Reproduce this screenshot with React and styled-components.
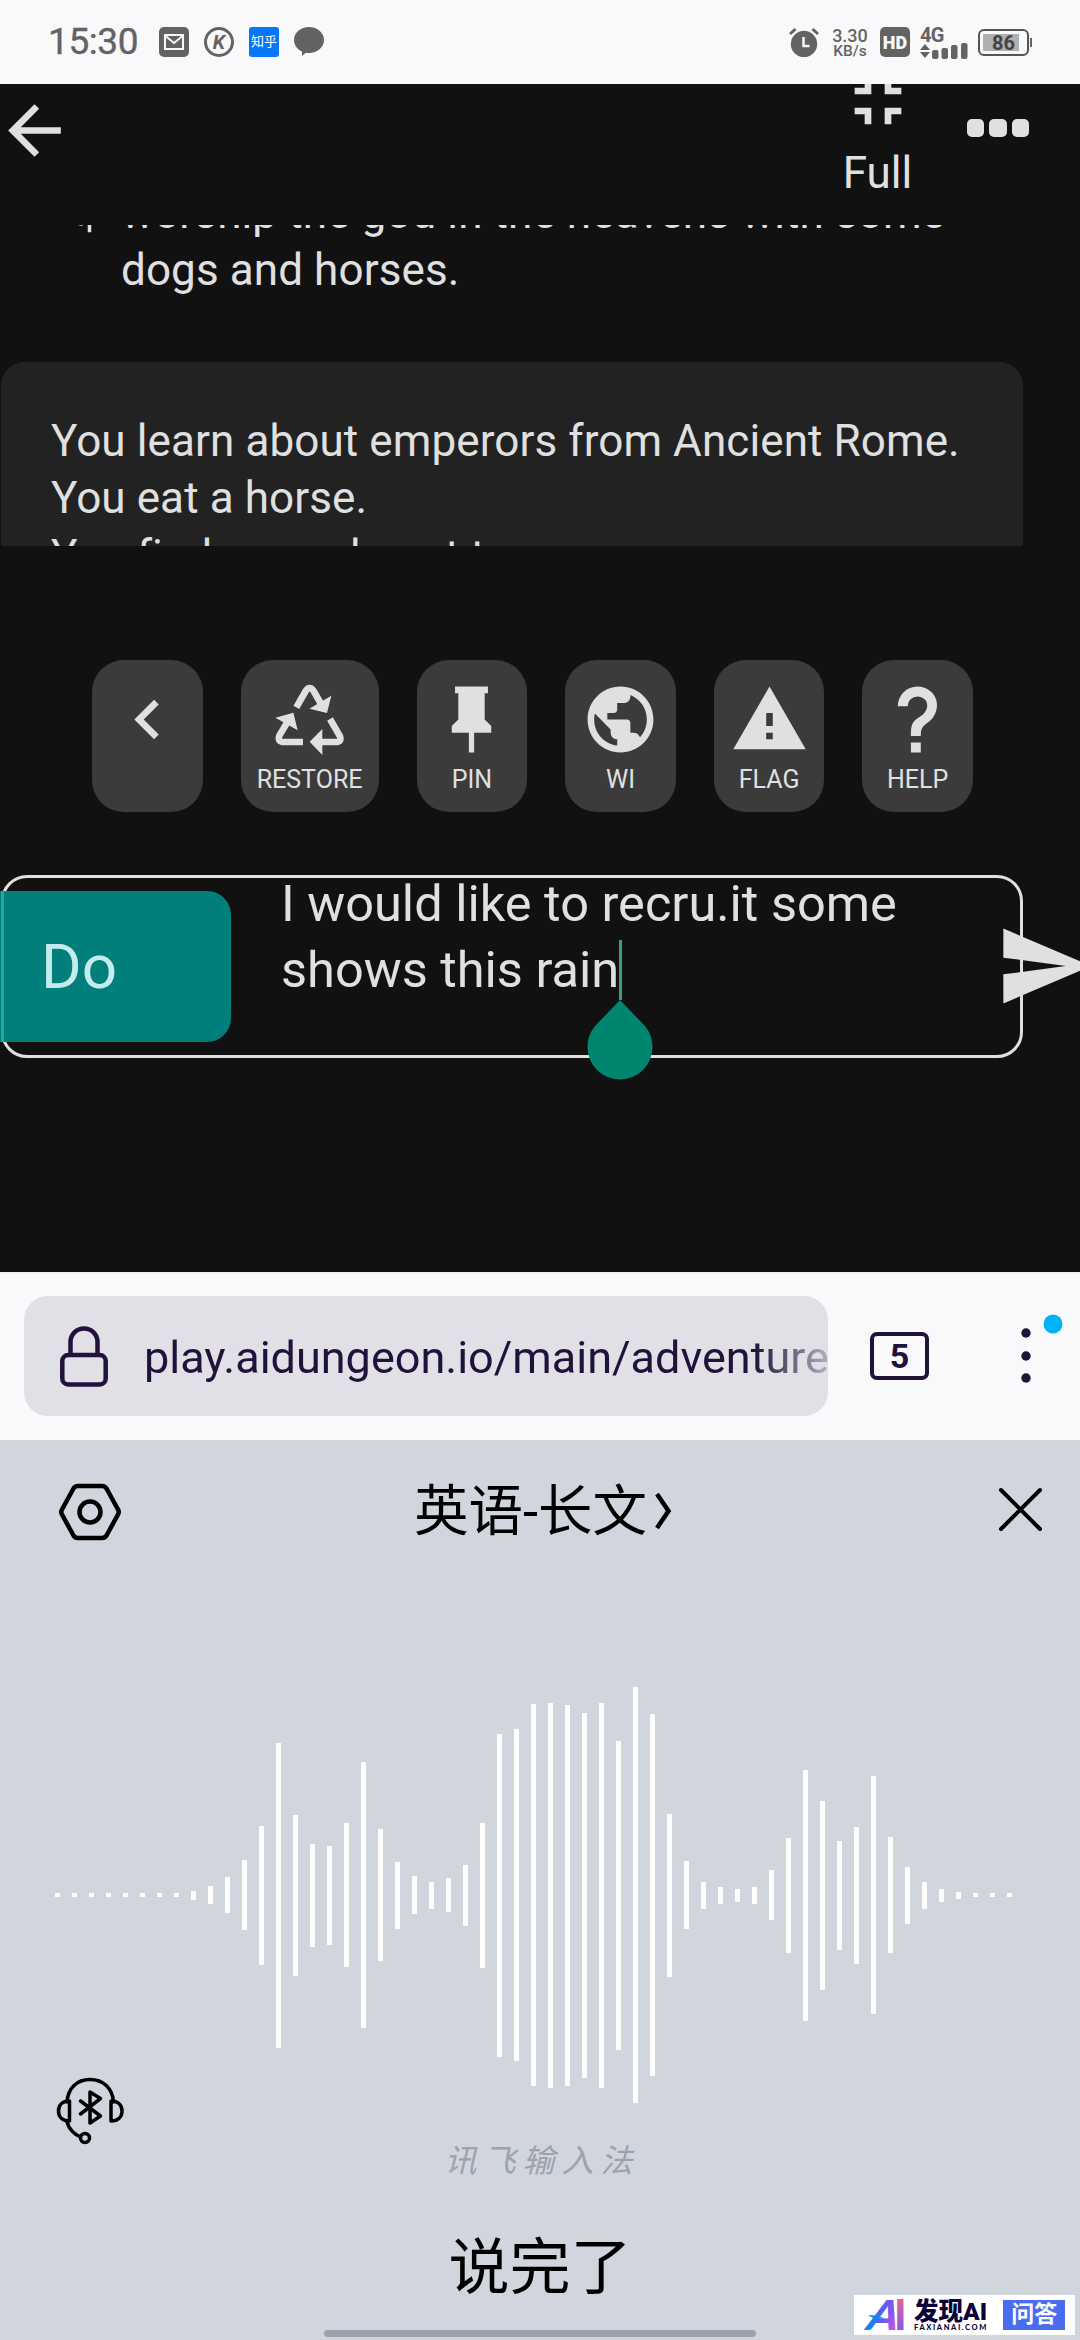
// App.jsx
import React from 'react';
import styled, { createGlobalStyle } from 'styled-components';
import {
  MdArrowBack,
  MdChevronLeft,
  MdDirectionsRun,
  MdFullscreenExit,
  MdPublic,
  MdSend,
  MdWarning,
} from 'react-icons/md';

const GlobalStyle = createGlobalStyle`
  * {
    box-sizing: border-box;
  }
  body {
    margin: 0;
    background: #111;
    font-family: Roboto, 'Noto Sans CJK SC', sans-serif;
  }
  svg {
    display: block;
    flex-shrink: 0;
  }
`;

const Screen = styled.div`
  position: relative;
  width: 1080px;
  height: 2340px;
  overflow: hidden;
  display: flex;
  flex-direction: column;
`;

/* status bar */

const StatusBar = styled.div`
  height: 84px;
  flex-shrink: 0;
  padding: 0 51px 0 48px;
  display: flex;
  align-items: center;
  justify-content: space-between;
  background: #f9f9fb;
  color: #636363;
`;

const StatusGroup = styled.div`
  display: flex;
  align-items: center;
  gap: ${(p) => p.$gap}px;
`;

const Clock = styled.span`
  width: 96px;
  font-size: 37px;
  line-height: 40px;
  letter-spacing: -0.4px;
  -webkit-text-stroke: 0.4px #636363;
`;

const ZhihuBadge = styled.span`
  width: 30px;
  height: 30px;
  border-radius: 3px;
  background: #0777f9;
  color: #fff;
  font-size: 13px;
  line-height: 30px;
  text-align: center;
`;

const KBadge = styled.span`
  width: 30px;
  height: 30px;
  border: 3px solid #636363;
  border-radius: 50%;
  font-size: 20px;
  font-weight: 700;
  font-style: italic;
  line-height: 24px;
  text-align: center;
`;

const NetSpeed = styled.div`
  width: 36px;
  margin-left: 3px;
  text-align: center;
  font-weight: 500;
  font-size: 18px;
  line-height: 17px;

  small {
    display: block;
    font-size: 15.5px;
    line-height: 14px;
  }
`;

const HdBadge = styled.span`
  width: 30px;
  height: 30px;
  margin-left: 2px;
  border-radius: 5px;
  background: #636363;
  color: #f9f9fb;
  font-size: 18px;
  font-weight: 900;
  line-height: 31px;
  text-align: center;
`;

const Network = styled.div`
  width: 48px;
  height: 31px;
  font-size: 20px;
  font-weight: 700;
  line-height: 16px;
  letter-spacing: -0.8px;
`;

const Battery = styled.div`
  position: relative;
  width: 51px;
  height: 27px;
  padding: 3px;
  border: 2px solid #555;
  border-radius: 6px;
  font-size: 20px;
  font-weight: 700;
  line-height: 18px;
  text-align: center;
  color: #444;
  background: linear-gradient(90deg, #b0b0b0 88%, transparent 88%) content-box;

  &::after {
    content: '';
    position: absolute;
    right: -5px;
    top: 7px;
    width: 2px;
    height: 9px;
    background: #636363;
  }
`;

/* game page */

const GamePage = styled.main`
  height: 1188px;
  flex-shrink: 0;
  background: #111;
  color: #e0e0e0;
`;

const GameHeader = styled.header`
  height: 141px;
  padding: 0 51px 0 0;
  display: flex;
  align-items: flex-start;
  overflow: hidden;
`;

const BackButton = styled.button`
  margin: 7px auto 0 -5px;
  padding: 0;
  border: none;
  background: none;
  color: inherit;
`;

const FullButton = styled.button`
  width: 80px;
  height: 141px;
  margin-top: -23px;
  padding: 0;
  border: none;
  background: none;
  color: inherit;
  display: flex;
  flex-direction: column;
  align-items: center;
  gap: 6px;
  font: 44px/52px Roboto, sans-serif;
`;

const MoreDots = styled.div`
  display: flex;
  gap: 5px;
  margin: 35px 0 0 49px;
`;

const Dot = styled.span`
  width: 17.5px;
  height: 18px;
  border-radius: 5px;
  background: #e0e0e0;
`;

const Story = styled.section`
  height: 321px;
  overflow: hidden;
  font-size: 44px;
  line-height: 57.3px;
  letter-spacing: 0.1px;
  white-space: nowrap;
`;

const ActionEntry = styled.div`
  display: flex;
  gap: 14px;
  margin-top: -40px;
  padding-left: 65px;

  svg {
    margin-top: 7px;
  }
`;

const StoryCard = styled.div`
  margin: 62px 0 0 1px;
  width: 1022px;
  padding: 51.5px 50px;
  border-radius: 24px;
  background: #222;
`;

const Toolbar = styled.nav`
  display: flex;
  gap: 38px;
  margin-top: 114px;
  padding-left: 92px;
`;

const Tool = styled.button`
  width: ${(p) => (p.$wide ? 138 : 110.6)}px;
  height: 152px;
  padding: 20px 0 0;
  border: none;
  border-radius: 32px;
  background: #3b3b3b;
  color: #e0e0e0;
  display: flex;
  flex-direction: column;
  align-items: center;
  font: 25px/30px Roboto, sans-serif;
`;

const ToolLabel = styled.span`
  margin-top: 6px;
`;

const InputRow = styled.div`
  position: relative;
  display: flex;
  align-items: center;
  width: 1022px;
  height: 183px;
  margin: 63px 0 0 1px;
  border: 3px solid #e0e0e0;
  border-radius: 26px;
`;

const ModeButton = styled.button`
  width: 231px;
  height: 151px;
  margin-left: -4px;
  padding: 0 0 0 41px;
  border: none;
  border-radius: 0 24px 24px 0;
  background: linear-gradient(90deg, #007f7b 1px, #1fa99c 1px 4px, #007f7b 4px);
  color: #c5ebee;
  text-align: left;
  font: 62px/70px Roboto, sans-serif;
`;

const Draft = styled.div`
  align-self: flex-start;
  margin: -7px 0 0 50px;
  font-size: 50.5px;
  line-height: 66px;
  white-space: pre;
`;

const Caret = styled.span`
  position: absolute;
  left: 615px;
  top: 62px;
  width: 3px;
  height: 60px;
  background: #3f9d72;
`;

const CaretHandle = styled.svg`
  position: absolute;
  left: 583px;
  top: 122px;
`;

const SendButton = styled(MdSend)`
  position: absolute;
  left: 991px;
  top: 38px;
`;

/* browser bar */

const BrowserBar = styled.div`
  height: 168px;
  flex-shrink: 0;
  padding: 0 14px 0 24px;
  display: flex;
  align-items: center;
  background: #f9f9fb;
  box-shadow: inset 0 2px #f1f1f3;
  color: #20123a;
`;

const AddressField = styled.div`
  width: 804px;
  height: 120px;
  padding-left: 36px;
  display: flex;
  align-items: center;
  gap: 36px;
  border-radius: 24px;
  background: #e0e0e6;
`;

const Url = styled.span`
  flex: 1;
  margin-top: 3px;
  overflow: hidden;
  font-size: 45px;
  line-height: 60px;
  white-space: nowrap;
  mask-image: linear-gradient(90deg, #000 610px, rgba(0, 0, 0, 0.25) 683px);
`;

const TabCount = styled.div`
  width: 60px;
  height: 48px;
  margin-left: 42px;
  border: 4px solid #20123a;
  border-radius: 7px;
  font-size: 34px;
  font-weight: 700;
  line-height: 40px;
  text-align: center;
`;

const BrowserMenu = styled.svg`
  margin-left: 83px;
`;

/* voice keyboard */

const Keyboard = styled.section`
  flex: 1;
  display: flex;
  flex-direction: column;
  align-items: center;
  background: #d0d5de;
  color: #000;
`;

const KeyboardHeader = styled.div`
  width: 100%;
  height: 144px;
  padding: 0 37px 0 58px;
  display: flex;
  align-items: center;
  justify-content: space-between;
`;

const Language = styled.div`
  display: flex;
  align-items: center;
  gap: 7px;
  margin: 0 33px 3px 0;
  font-size: 54.5px;
  line-height: 80px;
`;

const CloseIcon = styled.svg`
  margin-bottom: 7px;
`;

const Waveform = styled.div`
  height: 416px;
  width: 100%;
  margin-top: 103px;
  padding-left: 55px;
  display: flex;
  align-items: center;
  gap: 12px;
`;

const WaveBar = styled.span`
  width: 5px;
  height: ${(p) => p.$height}px;
  background: #fff;
`;

const KeyboardFooter = styled.div`
  width: 100%;
  height: 237px;
  display: grid;
  grid-template-columns: 126px 1fr 126px;
  justify-items: center;
`;

const Headset = styled.svg`
  margin: -28px 0 0 54px;
  justify-self: start;
`;

const FooterCenter = styled.div`
  display: flex;
  flex-direction: column;
  align-items: center;
`;

const Brand = styled.span`
  margin: 36px 0 0 4px;
  font-size: 32px;
  font-style: italic;
  line-height: 44px;
  letter-spacing: 7px;
  color: #9da2ab;
`;

const DoneButton = styled.button`
  margin-top: 40px;
  padding: 0;
  border: none;
  background: none;
  color: #000;
  font: 61px/90px Roboto, 'Noto Sans CJK SC', sans-serif;
`;

const HomeIndicator = styled.div`
  position: absolute;
  left: 324px;
  bottom: 3px;
  width: 432px;
  height: 7px;
  border-radius: 4px;
  background: #9ca2ab;
`;

const Watermark = styled.div`
  position: absolute;
  right: 5px;
  bottom: 5px;
  width: 221px;
  height: 40px;
  padding: 0 10px;
  display: flex;
  align-items: center;
  background: #fff;
  color: #0b0238;
`;

const WatermarkName = styled.div`
  width: 76px;
  margin: -1px 14px 0 8px;
  font-size: 24.5px;
  font-weight: 900;
  line-height: 25px;
  white-space: nowrap;

  small {
    display: block;
    font: 900 7.5px/7px Lato, sans-serif;
    letter-spacing: 1.6px;
  }
`;

const WatermarkTag = styled.span`
  width: 62px;
  height: 30px;
  background: #4a6cf0;
  color: #fff;
  font-size: 23px;
  font-weight: 700;
  line-height: 29px;
  text-align: center;
`;

const waveHeights = [
  4, 4, 4, 4, 4, 4, 4, 4, 9, 18, 36, 70, 139, 305, 161, 103, 99, 144, 266, 132,
  67, 38, 27, 34, 61, 145, 323, 332, 382, 385, 381, 365, 385, 309, 416, 362,
  163, 68, 27, 17, 13, 17, 50, 115, 251, 189, 109, 137, 238, 116, 57, 27, 13,
  7, 4, 4, 4,
];

const RecycleIcon = () => (
  <svg width="79" height="79" viewBox="632 121 237 237" fill="none" stroke="currentColor" strokeWidth="20">
    <path d="M711 203l28-49q12-18 24 0l24 42M812 238l30 52q5 17-12 17h-45M731 307h-62q-15-3-9-19l28-47" />
    <path fill="currentColor" stroke="none" d="M750 207l53 13 13-52zM751 306l38-38v78zM648 234l54-15 13 53z" />
  </svg>
);

const PinIcon = () => (
  <svg width="79" height="79" viewBox="0 0 24 24" fill="currentColor">
    <path d="M16 12V4h1V2H7v2h1v8l-2 2v2h5.2v6h1.6v-6H18v-2z" />
  </svg>
);

const QuestionIcon = () => (
  <svg width="79" height="79" viewBox="0 0 24 24" fill="currentColor">
    <path d="M10 19h3v3h-3zM12 2c5.35.22 7.68 5.62 4.5 9.67-.83 1-2.17 1.66-2.83 2.5C13 15 13 16 13 17h-3c0-1.67 0-3.08.67-4.08.66-1 2-1.59 2.83-2.25C15.92 8.43 15.32 5.26 12 5a3 3 0 0 0-3 3H6a6 6 0 0 1 6-6z" />
  </svg>
);

const tools = [
  { icon: <MdChevronLeft size={79} /> },
  { icon: <RecycleIcon />, label: 'RESTORE', wide: true },
  { icon: <PinIcon />, label: 'PIN' },
  { icon: <MdPublic size={79} />, label: 'WI' },
  { icon: <MdWarning size={79} />, label: 'FLAG' },
  { icon: <QuestionIcon />, label: 'HELP' },
];

const MailIcon = () => (
  <svg width="30" height="30" viewBox="0 0 30 30">
    <rect width="30" height="30" rx="5" fill="#636363" />
    <path d="M6 8h18v14H6zM6.5 9l8.5 7 8.5-7" fill="none" stroke="#f9f9fb" strokeWidth="2" />
  </svg>
);

const ChatIcon = () => (
  <svg width="30" height="30" viewBox="0 0 30 30" fill="#636363">
    <path d="M15 0c8.3 0 15 5.6 15 13s-6.7 13-15 13c-1.2 0-2.2 0-3.2-.3L8 29v-4.5C3 22.4 0 18 0 13 0 5.6 6.7 0 15 0z" />
  </svg>
);

const AlarmIcon = () => (
  <svg width="30" height="30" viewBox="0 0 30 30" fill="none" stroke="#636363" strokeWidth="3">
    <circle cx="15" cy="17" r="13.2" fill="#636363" stroke="none" />
    <path d="M1 7l5.5-5M29 7l-5.5-5" />
    <path d="M14.5 10v9h6" stroke="#f9f9fb" strokeWidth="2.5" />
  </svg>
);

const SignalIcon = () => (
  <svg width="48" height="17" viewBox="0 0 48 17" fill="#636363">
    <path d="M0 7l5-6 5 6zM0 9h10l-5 6z" />
    <rect x="12" y="7" width="6.5" height="9" rx="2" />
    <rect x="21.5" y="5" width="6.5" height="11" rx="2" />
    <rect x="31" y="2" width="6.5" height="14" rx="2" />
    <rect x="41" y="0" width="6.5" height="16" rx="2" />
  </svg>
);

const LogoMark = () => (
  <svg width="42" height="32" viewBox="0 0 42 32">
    <defs>
      <linearGradient id="slope" x1="0" y1="0" x2="1" y2="0">
        <stop offset="0.15" stopColor="#0a8cf0" />
        <stop offset="0.35" stopColor="#5560f5" />
        <stop offset="0.7" stopColor="#8a55f0" />
        <stop offset="1" stopColor="#d85cc8" />
      </linearGradient>
      <linearGradient id="bar" x1="0" y1="1" x2="0" y2="0">
        <stop offset="0.1" stopColor="#7a55f5" />
        <stop offset="1" stopColor="#ff6a80" />
      </linearGradient>
    </defs>
    <g fontFamily="Lato" fontWeight="900" fontSize="41.5">
      <text x="0" y="0" transform="translate(0 31) skewX(-19)" textLength="31" lengthAdjust="spacingAndGlyphs" fill="url(#slope)">
        A
      </text>
      <text x="30" y="31" fill="url(#bar)">
        I
      </text>
    </g>
    <path d="M4 16c6 0 12 1 17 4-4-1-9-1-13 3l1-4z" fill="#0a8cf0" />
  </svg>
);

const App = () => (
  <Screen>
    <GlobalStyle />

    <StatusBar>
      <StatusGroup $gap={15}>
        <Clock>15:30</Clock>
        <MailIcon />
        <KBadge>K</KBadge>
        <ZhihuBadge>知乎</ZhihuBadge>
        <ChatIcon />
      </StatusGroup>
      <StatusGroup $gap={10}>
        <AlarmIcon />
        <NetSpeed>
          3.30
          <small>KB/s</small>
        </NetSpeed>
        <HdBadge>HD</HdBadge>
        <Network>
          4G
          <SignalIcon />
        </Network>
        <Battery>86</Battery>
      </StatusGroup>
    </StatusBar>

    <GamePage>
      <GameHeader>
        <BackButton>
          <MdArrowBack size={79} />
        </BackButton>
        <FullButton>
          <MdFullscreenExit size={80} />
          Full
        </FullButton>
        <MoreDots>
          <Dot />
          <Dot />
          <Dot />
        </MoreDots>
      </GameHeader>

      <Story>
        <ActionEntry>
          <MdDirectionsRun size={42} />
          <div>
            worship the god in the heavens with some
            <br />
            dogs and horses.
          </div>
        </ActionEntry>
        <StoryCard>
          You learn about emperors from Ancient Rome.
          <br />
          You eat a horse.
          <br />
          You find a new beast to
        </StoryCard>
      </Story>

      <Toolbar>
        {tools.map((tool, i) => (
          <Tool key={i} $wide={tool.wide}>
            {tool.icon}
            {tool.label && <ToolLabel>{tool.label}</ToolLabel>}
          </Tool>
        ))}
      </Toolbar>

      <InputRow>
        <ModeButton>Do</ModeButton>
        <Draft>{'I would like to recru.it some\nshows this rain'}</Draft>
        <Caret />
        <CaretHandle width="66" height="81" viewBox="0 0 66 81">
          <path d="M33 0l23 24c6 6 9.5 14 9.5 23a32.5 32.5 0 0 1-65 0c0-9 3.5-17 9.5-23z" fill="#00856f" />
        </CaretHandle>
        <SendButton size={100} />
      </InputRow>
    </GamePage>

    <BrowserBar>
      <AddressField>
        <svg width="48" height="61" viewBox="0 0 48 61" fill="none" stroke="#20123a" strokeWidth="4.5">
          <rect x="2.3" y="29" width="43.4" height="29.5" rx="6" />
          <path d="M10.5 29V16a13.5 13.5 0 0 1 27 0v13" />
        </svg>
        <Url>play.aidungeon.io/main/adventure</Url>
      </AddressField>
      <TabCount>5</TabCount>
      <BrowserMenu width="54" height="84" viewBox="0 0 54 84" fill="#20123a">
        <circle cx="14" cy="19" r="4.7" />
        <circle cx="14" cy="42" r="4.7" />
        <circle cx="14" cy="64" r="4.7" />
        <circle cx="41" cy="10" r="9.5" fill="#00b3f4" />
      </BrowserMenu>
    </BrowserBar>

    <Keyboard>
      <KeyboardHeader>
        <svg width="64" height="60" viewBox="0 0 64 60" fill="none" stroke="#000" strokeWidth="4.5" strokeLinejoin="round">
          <path d="M20 4h24q3 0 4.500 2.500L60 27.500q1.500 2.500 0 5L48.500 53.500Q47 56 44 56H20q-3 0-4.500-2.500L4 32.500q-1.500-2.500 0-5L15.500 6.500Q17 4 20 4z" />
          <circle cx="32" cy="30" r="10.5" />
        </svg>
        <Language>
          英语-长文
          <svg width="18" height="40" viewBox="0 0 18 40" fill="none" stroke="#000" strokeWidth="4.5">
            <path d="M3 3l11.500 17L3 37" />
          </svg>
        </Language>
        <CloseIcon width="46" height="46" viewBox="0 0 46 46" stroke="#000" strokeWidth="4" strokeLinecap="round">
          <path d="M4 4l39 39M43 4L4 43" />
        </CloseIcon>
      </KeyboardHeader>

      <Waveform>
        {waveHeights.map((height, i) => (
          <WaveBar key={i} $height={height} />
        ))}
      </Waveform>

      <KeyboardFooter>
        <Headset width="72" height="72" viewBox="0 0 72 72" fill="none" stroke="#000" strokeWidth="3.5" strokeLinecap="round" strokeLinejoin="round">
          <path d="M13 27C14 13 23 4.500 36 4.500s22.500 8.500 23.500 22.500" />
          <path d="M15.500 26v20c-7 0-11-4-11-10s4-10 11-10zM57 26v20c7 0 11-4 11-10s-4-10-11-10z" />
          <path d="M13 47c2 7 7 12 13.500 15" />
          <circle cx="31" cy="63" r="4.5" />
          <path d="M26.500 26l20 15-10.500 7V17l10.500 6.500-20 15.500" />
        </Headset>
        <FooterCenter>
          <Brand>讯飞输入法</Brand>
          <DoneButton>说完了</DoneButton>
        </FooterCenter>
      </KeyboardFooter>
    </Keyboard>

    <HomeIndicator />

    <Watermark>
      <LogoMark />
      <WatermarkName>
        发现AI
        <small>FAXIANAI.COM</small>
      </WatermarkName>
      <WatermarkTag>问答</WatermarkTag>
    </Watermark>
  </Screen>
);

export default App;
